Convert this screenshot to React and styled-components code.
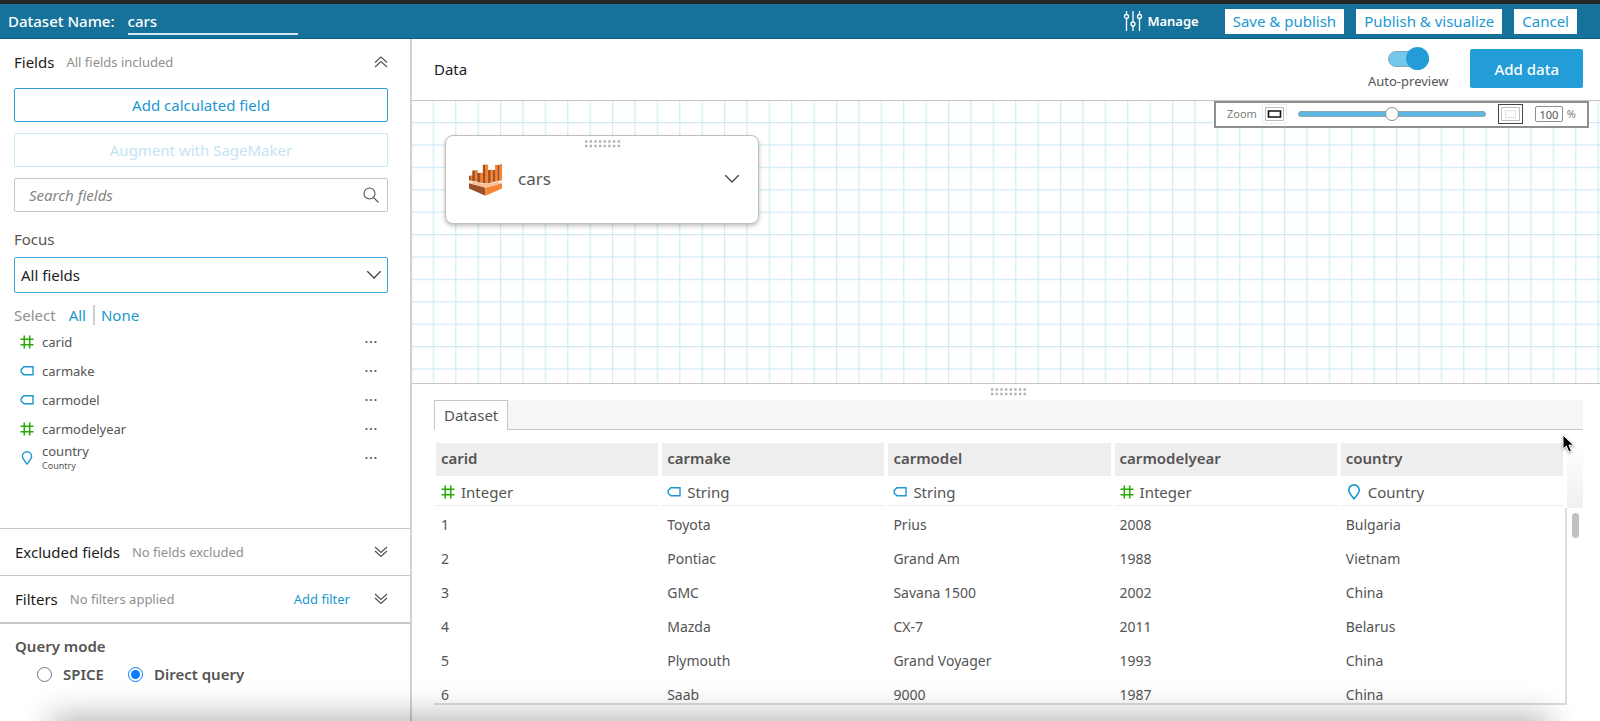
import { useState } from "react";
import styled, { createGlobalStyle, css } from "styled-components";

const GlobalStyle = createGlobalStyle`
  * {
    box-sizing: border-box;
  }

  body {
    margin: 0;
    color: #545454;
    background: #fff;
    font-family: "Noto Sans", "Open Sans", sans-serif;
    font-size: 14px;
    line-height: 20px;
  }

  button,
  input,
  select {
    font-family: inherit;
    margin: 0;
  }
`;

const Page = styled.div`
  display: flex;
  flex-direction: column;
  height: 100vh;
  overflow: hidden;
`;

const Header = styled.header`
  flex: none;
  display: flex;
  align-items: center;
  height: 39px;
  padding: 0 23px 0 8px;
  border-top: 4px solid #262626;
  border-bottom: 1px solid #075f88;
  background: #17729b;
  color: #fff;
`;

const NameLabel = styled.label`
  font-size: 15px;
  font-weight: 500;
`;

const NameInput = styled.input`
  width: 170px;
  height: 28px;
  margin-left: 13px;
  margin-right: auto;
  padding: 2px 0 0;
  border: 0;
  border-bottom: 2px solid #d5e5ed;
  background: transparent;
  color: #fff;
  font-size: 15px;
  font-weight: 500;
  outline: none;
`;

const ManageButton = styled.button`
  display: flex;
  align-items: center;
  gap: 4px;
  margin-right: 14px;
  padding: 0;
  border: 0;
  background: none;
  color: #fff;
  font-size: 13px;
  font-weight: 600;
`;

const HeaderButton = styled.button`
  height: 25px;
  margin-left: 12px;
  padding: 0 8px;
  border: 0;
  background: #fff;
  color: #1b98d0;
  font-size: 15px;
  line-height: 24px;
`;

const Body = styled.div`
  flex: 1;
  display: flex;
  min-height: 0;
`;

const Sidebar = styled.aside`
  flex: none;
  display: flex;
  flex-direction: column;
  width: 412px;
  border-right: 2px solid #d2d2d2;
`;

const FieldsPanel = styled.section`
  flex: 1;
  display: flex;
  flex-direction: column;
  min-height: 0;
  padding: 0 22px 0 14px;
`;

const PanelHeader = styled.div`
  flex: none;
  display: flex;
  align-items: center;
  height: 46px;
`;

const PanelTitle = styled.h2`
  margin: 0 12px 0 0;
  color: #1c1c1c;
  font-size: 15px;
  font-weight: 400;
`;

const PanelNote = styled.span`
  margin-right: auto;
  color: #8f8f8f;
  font-size: 13px;
`;

const IconButton = styled.button`
  display: flex;
  align-items: center;
  justify-content: center;
  padding: 0;
  border: 0;
  background: none;
  color: #545454;
`;

const OutlineButton = styled.button`
  flex: none;
  height: 34px;
  margin-top: ${({ $first }) => ($first ? "3px" : "11px")};
  padding: 0;
  border: 1px solid #2f9fd3;
  border-radius: 2px;
  background: #fff;
  color: #1b98d0;
  font-size: 15px;

  &:disabled {
    border-color: #c9e8f6;
    color: #c3e4f4;
  }
`;

const SearchBox = styled.div`
  flex: none;
  display: flex;
  align-items: center;
  height: 34px;
  margin-top: 11px;
  padding: 0 8px 0 14px;
  border: 1px solid #c6c6c6;
  border-radius: 2px;
`;

const SearchInput = styled.input`
  flex: 1;
  min-width: 0;
  padding: 0;
  border: 0;
  outline: none;
  font-size: 15px;

  &::placeholder {
    color: #858585;
    font-style: italic;
  }
`;

const FocusLabel = styled.label`
  margin-top: 17px;
  font-size: 15px;
`;

const SelectWrap = styled.div`
  flex: none;
  display: grid;
  align-items: center;
  height: 36px;
  margin-top: 8px;

  > * {
    grid-area: 1 / 1;
  }

  svg {
    justify-self: end;
    margin-right: 6px;
    pointer-events: none;
  }
`;

const FocusSelect = styled.select`
  appearance: none;
  width: 100%;
  height: 36px;
  padding: 0 6px;
  border: 1px solid #3fa5d6;
  border-radius: 2px;
  background: #fff;
  color: #1c1c1c;
  font-size: 15px;
  outline: none;
`;

const SelectRow = styled.div`
  display: flex;
  align-items: center;
  margin-top: 12px;
  color: #8f8f8f;
  font-size: 15px;
`;

const TextLink = styled.a`
  color: #1b98d0;
  text-decoration: none;
  font-size: ${({ $small }) => ($small ? "13px" : "15px")};

  ${SelectRow} & {
    margin-left: 13px;
  }

  ${SelectRow} & + & {
    margin-left: 7px;
    padding-left: 6px;
    border-left: 2px solid #cfcfcf;
  }
`;

const FieldList = styled.ul`
  list-style: none;
  margin: 2px 0 0;
  padding: 0;
`;

const FieldItem = styled.li`
  display: flex;
  align-items: center;
  height: 29px;
  padding: 0 11px 0 6px;
  font-size: 13px;
`;

const FieldName = styled.div`
  flex: 1;
  margin-left: 8px;
  line-height: 16px;

  small {
    display: block;
    font-size: 9px;
    line-height: 14px;
  }
`;

const Section = styled.section`
  flex: none;
  padding: 0 22px 0 15px;
  border-top: 1px solid #c6c6c6;

  ${TextLink} {
    margin-right: 24px;
  }
`;

const QueryMode = styled.fieldset`
  flex: none;
  min-width: 0;
  height: 99px;
  margin: 0;
  padding: 12px 15px;
  border: 0;
  border-top: 2px solid #c6c6c6;
`;

const QueryTitle = styled.div`
  font-size: 15px;
  font-weight: 600;
`;

const RadioRow = styled.div`
  display: flex;
  align-items: center;
  gap: 24px;
  margin-top: 8px;
  padding-left: 22px;
`;

const RadioLabel = styled.label`
  display: flex;
  align-items: center;
  gap: 11px;
  font-size: 15px;
  font-weight: 600;

  input {
    width: 15px;
    height: 15px;
    accent-color: #0a7aff;
  }
`;

const Main = styled.main`
  flex: 1;
  display: flex;
  flex-direction: column;
  min-width: 0;
`;

const Toolbar = styled.div`
  flex: none;
  display: flex;
  align-items: center;
  height: 62px;
  padding: 0 17px 2px 22px;
  border-bottom: 1px solid #c6c6c6;
`;

const ToolbarTitle = styled.h1`
  margin: 0 auto 0 0;
  color: #1c1c1c;
  font-size: 15px;
  font-weight: 400;
`;

const SwitchLabel = styled.label`
  display: flex;
  flex-direction: column;
  align-items: center;
  margin-right: 22px;
  font-size: 13px;
`;

const Switch = styled.input`
  appearance: none;
  display: flex;
  align-items: center;
  justify-content: ${({ checked }) => (checked ? "flex-end" : "flex-start")};
  width: 41px;
  height: 16px;
  margin: 4px 0;
  border: 1px solid #7fa5b7;
  border-radius: 8px;
  background: #76c7ec;

  &::before {
    content: "";
    width: 23px;
    height: 23px;
    margin-right: -1px;
    border-radius: 50%;
    background: #229dd8;
    flex: none;
  }
`;

const AddDataButton = styled.button`
  height: 39px;
  padding: 0 24px;
  border: 0;
  border-radius: 2px;
  background: #229dd8;
  color: #fff;
  font-size: 15px;
  font-weight: 500;
`;

const Canvas = styled.div`
  flex: none;
  position: relative;
  height: 283px;
  border-bottom: 1px solid #c6c6c6;
  overflow: hidden;
`;

const GridLines = styled.svg`
  display: block;
  width: 100%;
  height: 100%;
`;

const TableCard = styled.div`
  position: absolute;
  left: 33px;
  top: 34px;
  display: flex;
  flex-direction: column;
  align-items: center;
  width: 314px;
  height: 89px;
  padding-top: 4px;
  border: 1px solid #bfbfbf;
  border-radius: 8px;
  background: #fff;
  box-shadow: 0 2px 4px rgba(0, 0, 0, 0.25);
`;

const CardBody = styled.div`
  display: flex;
  align-items: center;
  align-self: stretch;
  margin-top: 14px;
  padding: 0 18px 0 23px;
  font-size: 17px;
  line-height: 34px;

  span {
    flex: 1;
    margin-left: 16px;
  }
`;

const ZoomBar = styled.div`
  position: absolute;
  top: 0;
  right: 11px;
  display: flex;
  align-items: center;
  width: 375px;
  height: 27px;
  padding: 0 11px 1px;
  border: 2px solid #8f8f8f;
  background: #fff;
  color: #7d7d7d;
  font-size: 11px;
`;

const ZoomButton = styled.button`
  display: flex;
  align-items: center;
  justify-content: center;
  width: 25px;
  height: 20px;
  padding: 0;
  border: 1px solid ${({ $active }) => ($active ? "#444" : "#eee")};
  background: #fff;
  color: ${({ $active }) => ($active ? "#e2e2e2" : "#111")};

  &:first-of-type {
    margin-left: 5px;
  }
`;

const ZoomSlider = styled.input`
  appearance: none;
  flex: 1;
  min-width: 0;
  height: 14px;
  margin: 0 12px 0 11px;
  background: transparent;

  &::-webkit-slider-runnable-track {
    height: 6px;
    border: 1px solid #8fa6b2;
    border-radius: 3px;
    background: #5db8e2;
  }

  &::-webkit-slider-thumb {
    appearance: none;
    width: 14px;
    height: 14px;
    margin-top: -5px;
    border: 1px solid #8a8a8a;
    border-radius: 50%;
    background: #fff;
  }
`;

const ZoomValue = styled.input`
  width: 28px;
  height: 16px;
  margin: 0 4px 0 12px;
  padding: 0;
  border: 1px solid #8f8f8f;
  border-radius: 2px;
  color: #545454;
  font-size: 11px;
  text-align: center;
`;

const DatasetPanel = styled.section`
  flex: 1;
  display: flex;
  flex-direction: column;
  min-height: 0;
  padding: 4px 17px 16px 22px;
`;

const Splitter = styled.div`
  display: flex;
  justify-content: center;
  height: 12px;
`;

const Tabs = styled.div`
  flex: none;
  display: flex;
  height: 30px;
  border-bottom: 1px solid #c6c6c6;
  background: #f6f6f6;
`;

const Tab = styled.button`
  height: 30px;
  padding: 0 9px 2px;
  border: 1px solid #c6c6c6;
  border-bottom: 0;
  background: #fff;
  color: #545454;
  font-size: 15px;
`;

const TableArea = styled.div`
  flex: 1;
  display: flex;
  min-height: 0;
  margin-top: 13px;
`;

const TableScroll = styled.div`
  flex: 1;
  min-width: 0;
  padding-left: 2px;
  border-bottom: 2px solid #dcdcdc;
  overflow: hidden;
`;

const Table = styled.table`
  width: 100%;
  table-layout: fixed;
  border-collapse: separate;
  border-spacing: 0;
`;

const cell = css`
  padding: 0 0 0 5px;
  text-align: left;
  border-right: 4px solid #fff;
  background-clip: padding-box;
`;

const HeadCell = styled.th`
  ${cell}
  height: 33px;
  padding-bottom: 4px;
  background-color: #eee;
  font-size: 15px;
  font-weight: 600;
`;

const TypeCell = styled.td`
  ${cell}
  height: 32px;
  background-image: linear-gradient(#ececec, #ececec);
  background-size: 100% 1px;
  background-position: 0 29px;
  background-repeat: no-repeat;
  font-size: 15px;

  div {
    display: flex;
    align-items: center;
    gap: 6px;
  }
`;

const DataCell = styled.td`
  height: 34px;
  padding: 0 0 0 5px;
  font-size: 14px;

  &:last-child {
    border-right: 2px solid #dcdcdc;
  }
`;

const Gutter = styled.div`
  flex: none;
  width: 16px;
`;

const GutterHead = styled.div`
  height: 65px;
  background: linear-gradient(#fff, #f0f0f0);
`;

const Thumb = styled.div`
  width: 7px;
  height: 25px;
  margin: 5px auto 0;
  border-radius: 4px;
  background: #c1c1c1;
`;

const Pointer = styled.svg`
  position: fixed;
  left: 1562px;
  top: 434px;
  filter: drop-shadow(0 1px 1px rgba(0, 0, 0, 0.4));
  pointer-events: none;
`;

const BottomShade = styled.div`
  position: fixed;
  left: 60px;
  right: 60px;
  bottom: -24px;
  height: 20px;
  box-shadow: 0 0 32px 8px rgba(0, 0, 0, 0.32);
  pointer-events: none;
`;

const HashIcon = () => (
  <svg width="14" height="14" viewBox="0 0 14 14" fill="none" stroke="#2ea80c" strokeWidth="1.6">
    <path d="M4.3 .5v13M9.7 .5v13M.5 4.3h13M.5 9.7h13" />
  </svg>
);

const TagIcon = () => (
  <svg width="14" height="14" viewBox="0 0 14 14" fill="none" stroke="#1b98d0" strokeWidth="1.4">
    <path d="M4 2.800h9v8H4L1.200 8.200V5.400z" />
  </svg>
);

const PinIcon = ({ size = 14 }) => (
  <svg width={size} height={size} viewBox="0 0 14 14" fill="none" stroke="#1b98d0" strokeWidth="1.4">
    <path d="M7 13C5 10.4 2.400 8 2.400 5.300A4.600 4.600 0 0 1 7 .8a4.600 4.600 0 0 1 4.600 4.500C11.600 8 9 10.400 7 13z" />
  </svg>
);

const DoubleChevron = ({ up }) => (
  <svg width="14" height="12" viewBox="0 0 14 12" fill="none" stroke="currentColor" strokeWidth="1.2">
    <path d={up ? "M1 6.500l6-5.500 6 5.500M1 11l6-5.500 6 5.500" : "M1 1l6 5.500L13 1M1 5l6 5.500L13 5"} />
  </svg>
);

const Chevron = () => (
  <svg width="16" height="10" viewBox="0 0 16 10" fill="none" stroke="#444" strokeWidth="1.3">
    <path d="M1.300 1.300L8 8l6.700-6.700" />
  </svg>
);

const SearchIcon = () => (
  <svg width="16" height="16" viewBox="0 0 16 16" fill="none" stroke="#545454" strokeWidth="1.1">
    <circle cx="6.5" cy="6.5" r="5.5" />
    <path d="M10.5 10.5l5 5" />
  </svg>
);

const DotsIcon = () => (
  <svg width="12" height="4" viewBox="0 0 12 4" fill="#545454">
    <circle cx="1.5" cy="2" r="1.1" />
    <circle cx="6" cy="2" r="1.1" />
    <circle cx="10.5" cy="2" r="1.1" />
  </svg>
);

const GripIcon = () => (
  <svg width="35" height="8" viewBox="0 0 35 8" stroke="#b4b4b4" strokeWidth="2.4" strokeDasharray="2.400 2.250">
    <path d="M0 1.500h35M0 6h35" />
  </svg>
);

const SlidersIcon = () => (
  <svg width="20" height="20" viewBox="0 0 20 20" fill="none" stroke="#fff" strokeWidth="1.3">
    <path d="M3.500 0v3.500M3.500 7.500V20M10 0v11M10 15v5M16.500 0v3.500M16.500 7.500V20" />
    <circle cx="3.500" cy="5.500" r="2" />
    <circle cx="10" cy="13" r="2" />
    <circle cx="16.500" cy="5.500" r="2" />
  </svg>
);

const SourceLogo = () => (
  <svg width="33" height="33" viewBox="0 0 100 98">
    <path
      fill="#9d5025"
      d="M0 38h10v14H0zM10 22h16v32H10zM25 29h17v29H25zM42 4h8v56h-8zM50 20h15v40H50zM65 20h15v36H65zM80 5h13v48H80z"
    />
    <path
      fill="#f58534"
      d="M5 37l5 1v15H5zM18 20l7 2v33l-7-1zM34 28l8 2v28l-8-2zM49 2l9 3v54l-9 2zM65 18l8 2v37l-8 2zM79 4l8 2v48l-8 1zM93 1l7 2v49l-7 1z"
    />
    <path fill="#fbbf93" d="M0 59l12-3 38 7 38-7 12 3-50 14z" />
    <path fill="#9d5025" d="M0 60l50 14v24L0 76z" />
    <path fill="#f58534" d="M100 60L50 74v24l50-22z" />
  </svg>
);

const ZoomIcon = ({ large }) => (
  <svg width="19" height="14" viewBox="0 0 19 14" fill="none">
    <path d="M.5 .5h18v13H.5z" stroke="#bdbdbd" />
    <path d={large ? "M4.500 3.500h10v7h-10z" : "M3.500 4h12v6h-12z"} stroke="currentColor" strokeWidth={large ? 1 : 1.6} />
  </svg>
);

const typeIcons = {
  Integer: HashIcon,
  String: TagIcon,
  Country: PinIcon,
};

const fields = [
  { name: "carid", type: "Integer" },
  { name: "carmake", type: "String" },
  { name: "carmodel", type: "String" },
  { name: "carmodelyear", type: "Integer" },
  { name: "country", type: "Country" },
];

const rows = [
  [1, "Toyota", "Prius", 2008, "Bulgaria"],
  [2, "Pontiac", "Grand Am", 1988, "Vietnam"],
  [3, "GMC", "Savana 1500", 2002, "China"],
  [4, "Mazda", "CX-7", 2011, "Belarus"],
  [5, "Plymouth", "Grand Voyager", 1993, "China"],
  [6, "Saab", "9000", 1987, "China"],
];

const FieldsSidebar = () => {
  const [mode, setMode] = useState("direct");

  return (
    <Sidebar>
      <FieldsPanel>
        <PanelHeader>
          <PanelTitle>Fields</PanelTitle>
          <PanelNote>All fields included</PanelNote>
          <IconButton aria-label="Collapse fields">
            <DoubleChevron up />
          </IconButton>
        </PanelHeader>
        <OutlineButton $first>Add calculated field</OutlineButton>
        <OutlineButton disabled>Augment with SageMaker</OutlineButton>
        <SearchBox>
          <SearchInput aria-label="Search fields" placeholder="Search fields" />
          <SearchIcon />
        </SearchBox>
        <FocusLabel htmlFor="focus">Focus</FocusLabel>
        <SelectWrap>
          <FocusSelect id="focus">
            <option>All fields</option>
          </FocusSelect>
          <Chevron />
        </SelectWrap>
        <SelectRow>
          Select
          <TextLink href="#all">All</TextLink>
          <TextLink href="#none">None</TextLink>
        </SelectRow>
        <FieldList>
          {fields.map(({ name, type }) => {
            const Icon = typeIcons[type];
            return (
              <FieldItem key={name}>
                <Icon />
                <FieldName>
                  {name}
                  {type === "Country" && <small>{type}</small>}
                </FieldName>
                <IconButton aria-label={`${name} options`}>
                  <DotsIcon />
                </IconButton>
              </FieldItem>
            );
          })}
        </FieldList>
      </FieldsPanel>
      <Section>
        <PanelHeader>
          <PanelTitle>Excluded fields</PanelTitle>
          <PanelNote>No fields excluded</PanelNote>
          <IconButton aria-label="Expand excluded fields">
            <DoubleChevron />
          </IconButton>
        </PanelHeader>
      </Section>
      <Section>
        <PanelHeader>
          <PanelTitle>Filters</PanelTitle>
          <PanelNote>No filters applied</PanelNote>
          <TextLink href="#filter" $small>
            Add filter
          </TextLink>
          <IconButton aria-label="Expand filters">
            <DoubleChevron />
          </IconButton>
        </PanelHeader>
      </Section>
      <QueryMode aria-labelledby="query-mode">
        <QueryTitle id="query-mode">Query mode</QueryTitle>
        <RadioRow>
          <RadioLabel>
            <input type="radio" name="mode" checked={mode === "spice"} onChange={() => setMode("spice")} />
            SPICE
          </RadioLabel>
          <RadioLabel>
            <input type="radio" name="mode" checked={mode === "direct"} onChange={() => setMode("direct")} />
            Direct query
          </RadioLabel>
        </RadioRow>
      </QueryMode>
    </Sidebar>
  );
};

const JoinCanvas = () => {
  const [zoom, setZoom] = useState(100);

  return (
    <Canvas>
      <GridLines aria-hidden="true">
        <defs>
          <pattern id="grid" x="-1.7" y="-1.4" width="22.4" height="22.4" patternUnits="userSpaceOnUse">
            <path d="M.7 0v22.4M0 .7h22.4" stroke="#cfebf7" strokeWidth="1.2" />
          </pattern>
        </defs>
        <rect width="100%" height="100%" fill="url(#grid)" />
      </GridLines>
      <TableCard>
        <GripIcon />
        <CardBody>
          <SourceLogo />
          <span>cars</span>
          <IconButton aria-label="cars options">
            <Chevron />
          </IconButton>
        </CardBody>
      </TableCard>
      <ZoomBar>
        <label htmlFor="zoom">Zoom</label>
        <ZoomButton aria-label="Zoom out">
          <ZoomIcon />
        </ZoomButton>
        <ZoomSlider
          id="zoom"
          type="range"
          min="0"
          max="200"
          value={zoom}
          onChange={(e) => setZoom(Number(e.target.value))}
        />
        <ZoomButton $active aria-label="Zoom in">
          <ZoomIcon large />
        </ZoomButton>
        <ZoomValue aria-label="Zoom percent" value={zoom} onChange={(e) => setZoom(Number(e.target.value))} />%
      </ZoomBar>
    </Canvas>
  );
};

const DatasetTable = () => (
  <TableArea>
    <TableScroll>
      <Table>
        <thead>
          <tr>
            {fields.map(({ name }) => (
              <HeadCell key={name}>{name}</HeadCell>
            ))}
          </tr>
          <tr>
            {fields.map(({ name, type }) => {
              const Icon = typeIcons[type];
              return (
                <TypeCell key={name}>
                  <div>
                    <Icon size={type === "Country" ? 16 : undefined} />
                    {type}
                  </div>
                </TypeCell>
              );
            })}
          </tr>
        </thead>
        <tbody>
          {rows.map((row) => (
            <tr key={row[0]}>
              {row.map((value, index) => (
                <DataCell key={index}>{value}</DataCell>
              ))}
            </tr>
          ))}
        </tbody>
      </Table>
    </TableScroll>
    <Gutter>
      <GutterHead />
      <Thumb />
    </Gutter>
  </TableArea>
);

const App = () => {
  const [name, setName] = useState("cars");
  const [preview, setPreview] = useState(true);

  return (
    <>
      <GlobalStyle />
      <Page>
        <Header>
          <NameLabel htmlFor="dataset-name">Dataset Name:</NameLabel>
          <NameInput id="dataset-name" value={name} onChange={(e) => setName(e.target.value)} />
          <ManageButton>
            <SlidersIcon />
            Manage
          </ManageButton>
          <HeaderButton>Save &amp; publish</HeaderButton>
          <HeaderButton>Publish &amp; visualize</HeaderButton>
          <HeaderButton>Cancel</HeaderButton>
        </Header>
        <Body>
          <FieldsSidebar />
          <Main>
            <Toolbar>
              <ToolbarTitle>Data</ToolbarTitle>
              <SwitchLabel>
                <Switch
                  type="checkbox"
                  role="switch"
                  checked={preview}
                  onChange={(e) => setPreview(e.target.checked)}
                />
                Auto-preview
              </SwitchLabel>
              <AddDataButton>Add data</AddDataButton>
            </Toolbar>
            <JoinCanvas />
            <DatasetPanel>
              <Splitter>
                <GripIcon />
              </Splitter>
              <Tabs role="tablist">
                <Tab role="tab" aria-selected="true">
                  Dataset
                </Tab>
              </Tabs>
              <DatasetTable />
            </DatasetPanel>
          </Main>
        </Body>
      </Page>
      <Pointer width="14" height="20" viewBox="0 0 14 20" aria-hidden="true">
        <path d="M1 1v14l3.300-3 2.500 6 2.600-1.100L7 11.200h4.600z" fill="#000" stroke="#fff" />
      </Pointer>
      <BottomShade />
    </>
  );
};

export default App;
